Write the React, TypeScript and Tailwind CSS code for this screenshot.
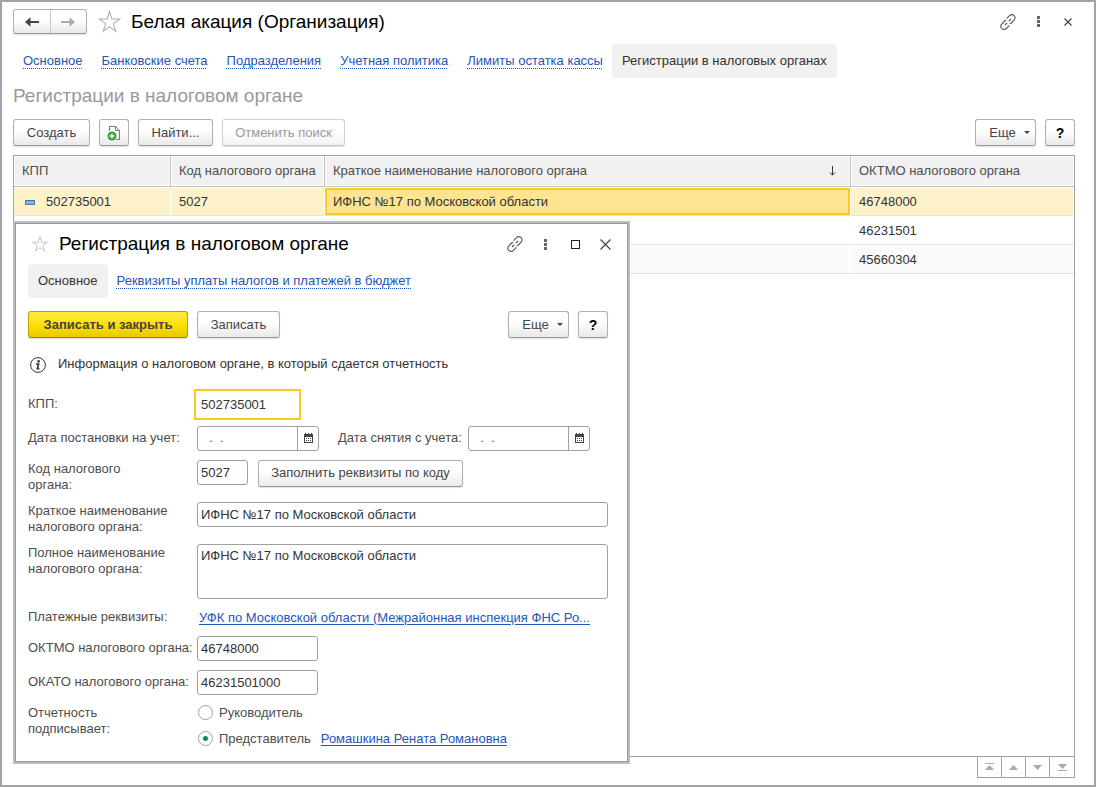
import { useState } from 'react';
import type { ReactNode } from 'react';

const registrations = [
    { kpp: '502735001', code: '5027', name: 'ИФНС №17 по Московской области', oktmo: '46748000' },
    { kpp: '', code: '', name: '', oktmo: '46231501' },
    { kpp: '', code: '', name: '', oktmo: '45660304' },
];

const tabs = ['Основное', 'Банковские счета', 'Подразделения', 'Учетная политика', 'Лимиты остатка кассы'];

const Button = ({ children, variant = 'default', className = '', ...props }: any) => {
    const variants = {
        default: 'border-[#b0b0b0] border-b-[#989898] bg-linear-to-b from-white from-40% to-[#e9e9e9] text-[#444]',
        primary: 'border-[#b8a000] border-b-[#948000] bg-linear-to-b from-[#ffec3d] via-[#ffe000] to-[#e8c900] font-bold text-[#444]',
        disabled: 'border-[#d0d0d0] border-b-[#c4c4c4] bg-linear-to-b from-white from-40% to-[#f3f3f3] text-[#999]',
    };
    return (
        <button
            type="button"
            disabled={variant === 'disabled'}
            className={`flex h-[27px] shrink-0 items-center justify-center rounded-[3px] border whitespace-nowrap shadow-[0_1px_1px_#0000001f] ${variants[variant as keyof typeof variants]} ${className}`}
            {...props}
        >
            {children}
        </button>
    );
};

const MoreButton = () => (
    <Button className="w-[61px] gap-2 pl-2">
        Еще
        <svg width="6" height="3" viewBox="0 0 6 3" fill="#444" aria-hidden="true">
            <path d="M0 0h6L3 3z" />
        </svg>
    </Button>
);

const HelpButton = () => (
    <Button className="w-[30px]" aria-label="Справка">
        <span className="text-sm font-bold text-black">?</span>
    </Button>
);

const StarIcon = ({ size }: { size: number }) => (
    <svg width={size} height={size} viewBox="0 0 24 24" fill="none" stroke="#a9b0b6" aria-hidden="true">
        <path d="M12 2.4l2.3 7.2h7.6l-6.2 4.5 2.4 7.3-6.1-4.5-6.1 4.5 2.4-7.3-6.2-4.5h7.6z" />
    </svg>
);

const LinkIcon = () => (
    <svg width="16" height="16" viewBox="0 0 16 16" fill="none" stroke="#555" strokeWidth="1.1" aria-hidden="true">
        <path d="M6.6 4.6l2.9-2.9a3 3 0 0 1 4.8 4.2l-3 3.1a3 3 0 0 1-1.6.8" />
        <path d="M9.4 11.4l-2.9 2.9a3 3 0 0 1-4.8-4.2l3-3.1a3 3 0 0 1 1.6-.8" />
        <path d="M5 11l2.2-2.2M8.8 7.2L11 5" />
    </svg>
);

const DotsIcon = () => (
    <svg width="3" height="11" viewBox="0 0 3 11" fill="#666" aria-hidden="true">
        <path d="M0 0h3v3H0zM0 4h3v3H0zM0 8h3v3H0z" />
    </svg>
);

const CloseIcon = ({ size }: { size: number }) => (
    <svg width={size} height={size} viewBox={`0 0 ${size} ${size}`} stroke="#444" strokeWidth="1.2" aria-hidden="true">
        <path d={`M.5.5L${size - 0.5} ${size - 0.5}M${size - 0.5}.5L.5 ${size - 0.5}`} />
    </svg>
);

const CalendarIcon = () => (
    <svg width="9" height="10" viewBox="0 0 9 10" fill="#444" aria-hidden="true">
        <path fillRule="evenodd" d="M1 0h1v1h2V0h1v1h2V0h1v1h1v9H0V1h1zM1 4v5h7V4z" />
        <path d="M2 5h1v1H2zM4 5h1v1H4zM6 5h1v1H6zM2 7h1v1H2zM4 7h1v1H4zM6 7h1v1H6z" />
    </svg>
);

const IconButton = ({ label, children }: { label: string; children: ReactNode }) => (
    <button type="button" aria-label={label} className="flex h-5 w-[30px] items-center justify-center">
        {children}
    </button>
);

const TabLink = ({ children }: { children: ReactNode }) => (
    <a href="#" className="text-[#1f55b8] underline decoration-dotted decoration-1 underline-offset-3">
        {children}
    </a>
);

const inputClass = 'h-[25px] rounded-[3px] border border-[#a0a0a0] bg-white px-[3px] text-[#333] outline-none';

const Row = ({ label, id, tall = false, children }: { label: string; id?: string; tall?: boolean; children: ReactNode }) => (
    <div className={`flex ${tall ? 'items-start' : 'items-center'}`}>
        <label htmlFor={id} className={`w-[169px] shrink-0 leading-4 whitespace-pre-line ${tall ? 'pt-px' : ''}`}>
            {label}
        </label>
        {children}
    </div>
);

const DateField = ({ id }: { id: string }) => (
    <div className="flex h-[25px] w-[122px] rounded-[3px] border border-[#a0a0a0] bg-white">
        <input id={id} type="text" defaultValue="  .  ." className="w-full min-w-0 px-1 text-[#555] outline-none" />
        <button
            type="button"
            aria-label="Выбрать дату"
            className="flex w-[21px] shrink-0 items-center justify-center border-l border-[#a0a0a0]"
        >
            <CalendarIcon />
        </button>
    </div>
);

const radioClass =
    'size-[15px] appearance-none rounded-full border border-[#a0a0a0] bg-white checked:bg-[radial-gradient(circle,#009646_2px,transparent_3px)]';

function RegistrationDialog() {
    const [signer, setSigner] = useState('representative');

    return (
        <div
            role="dialog"
            aria-label="Регистрация в налоговом органе"
            className="absolute top-[219px] left-[11px] w-[617px] border-2 border-[#bdbdbd] bg-white"
        >
            <div className="border border-[#999] pr-[19px] pb-[14px] pl-3">
                <div className="flex items-center pt-2">
                    <div className="flex w-[31px] pl-[3px]">
                        <StarIcon size={18} />
                    </div>
                    <h2 className="flex-1 text-[19px] leading-6 text-black">Регистрация в налоговом органе</h2>
                    <div className="-mr-3 flex">
                        <IconButton label="Ссылка"><LinkIcon /></IconButton>
                        <IconButton label="Меню"><DotsIcon /></IconButton>
                        <IconButton label="Развернуть">
                            <span className="size-[9px] border border-[#222]" />
                        </IconButton>
                        <IconButton label="Закрыть"><CloseIcon size={11} /></IconButton>
                    </div>
                </div>

                <nav className="mt-2 flex items-center gap-[9px]">
                    <span className="rounded-[4px] bg-[#f1f1f1] px-[10px] py-[9px] leading-4 text-[#333]">Основное</span>
                    <TabLink>Реквизиты уплаты налогов и платежей в бюджет</TabLink>
                </nav>

                <div className="mt-[13px] flex items-center gap-[9px]">
                    <Button variant="primary" className="w-40">Записать и закрыть</Button>
                    <Button className="w-[83px]">Записать</Button>
                    <div className="flex-1" />
                    <MoreButton />
                    <HelpButton />
                </div>

                <div className="mt-4 flex items-center gap-3 pl-[2px] text-[#333]">
                    <svg width="16" height="18" viewBox="0 0 16 18" fill="none" stroke="#333" aria-hidden="true">
                        <circle cx="8" cy="10" r="7.4" />
                        <circle cx="8.6" cy="6.2" r="1.3" fill="#333" stroke="none" />
                        <path d="M6 9h2.6l-1.2 4.6h2" strokeWidth="1.7" />
                    </svg>
                    Информация о налоговом органе, в который сдается отчетность
                </div>

                <form className="mt-[18px] flex flex-col gap-[9px]">
                    <Row label="КПП:" id="kpp">
                        <input
                            id="kpp"
                            defaultValue="502735001"
                            className="h-[25px] w-[101px] bg-white px-1 text-[#333] outline-2 outline-offset-1 outline-[#f8ca24]"
                        />
                    </Row>
                    <Row label="Дата постановки на учет:" id="start">
                        <DateField id="start" />
                        <label htmlFor="end" className="ml-[19px] w-[130px]">Дата снятия с учета:</label>
                        <DateField id="end" />
                    </Row>
                    <Row label={'Код налогового\nоргана:'} id="code" tall>
                        <input id="code" defaultValue="5027" className={`${inputClass} w-[51px]`} />
                        <Button className="ml-[10px] w-[205px]">Заполнить реквизиты по коду</Button>
                    </Row>
                    <Row label={'Краткое наименование\nналогового органа:'} id="short" tall>
                        <input id="short" defaultValue="ИФНС №17 по Московской области" className={`${inputClass} flex-1`} />
                    </Row>
                    <Row label={'Полное наименование\nналогового органа:'} id="full" tall>
                        <textarea
                            id="full"
                            defaultValue="ИФНС №17 по Московской области"
                            className="h-[55px] flex-1 resize-none rounded-[3px] border border-[#a0a0a0] bg-white px-[3px] py-[3px] leading-4 text-[#333] outline-none"
                        />
                    </Row>
                    <Row label="Платежные реквизиты:">
                        <a href="#" className="pl-[2px] leading-[19px] text-[#1f55b8] underline underline-offset-2">
                            УФК по Московской области (Межрайонная инспекция ФНС Ро...
                        </a>
                    </Row>
                    <Row label="ОКТМО налогового органа:" id="oktmo">
                        <input id="oktmo" defaultValue="46748000" className={`${inputClass} w-[121px]`} />
                    </Row>
                    <Row label="ОКАТО налогового органа:" id="okato">
                        <input id="okato" defaultValue="46231501000" className={`${inputClass} w-[121px]`} />
                    </Row>
                    <Row label={'Отчетность\nподписывает:'} tall>
                        <div className="flex flex-col gap-[10px] pt-px pl-px leading-4">
                            <label className="flex items-center gap-[6px]">
                                <input
                                    type="radio"
                                    name="signer"
                                    className={radioClass}
                                    checked={signer === 'head'}
                                    onChange={() => setSigner('head')}
                                />
                                Руководитель
                            </label>
                            <div className="flex items-center gap-[10px]">
                                <label className="flex items-center gap-[6px]">
                                    <input
                                        type="radio"
                                        name="signer"
                                        className={radioClass}
                                        checked={signer === 'representative'}
                                        onChange={() => setSigner('representative')}
                                    />
                                    Представитель
                                </label>
                                <a href="#" className="text-[#1f55b8] underline underline-offset-2">Ромашкина Рената Романовна</a>
                            </div>
                        </div>
                    </Row>
                </form>
            </div>
        </div>
    );
}

const thClass = 'h-[31px] border-b border-[#c0c0c0] bg-[#f1f1f1] px-2 text-left font-normal shadow-[inset_0_0_0_1px_#fff]';
const tdClass = 'h-[29px] border-y border-r border-t-white border-r-white border-b-[#e2e2e2] px-2 pt-px';

export default function App() {
    return (
        <div className="relative flex min-h-screen flex-col border-2 border-[#a3a3a3] bg-white pr-[19px] pb-[7px] pl-[11px] font-['Liberation_Sans',Arial,sans-serif] text-[13px] text-[#4d4d4d]">
            <header className="flex items-center pt-[7px]">
                <div className="flex h-[25px] w-[74px] rounded-[3px] border border-[#b0b0b0] border-b-[#989898] bg-linear-to-b from-white from-40% to-[#e9e9e9] shadow-[0_1px_1px_#0000001f]">
                    <button type="button" aria-label="Назад" className="flex flex-1 items-center justify-center border-r border-[#c8c8c8]">
                        <svg width="14" height="10" viewBox="0 0 14 10" fill="#444" aria-hidden="true">
                            <path d="M0 5L5.5.2v3.8H14v2H5.5v3.8z" />
                        </svg>
                    </button>
                    <button type="button" aria-label="Вперед" className="flex flex-1 items-center justify-center">
                        <svg width="14" height="10" viewBox="0 0 14 10" fill="#aaa" aria-hidden="true">
                            <path d="M14 5L8.5.2v3.8H0v2h8.5v3.8z" />
                        </svg>
                    </button>
                </div>
                <div className="ml-[10px] flex">
                    <StarIcon size={25} />
                </div>
                <h1 className="ml-[9px] flex-1 text-[19px] leading-6 text-black">Белая акация (Организация)</h1>
                <div className="-mr-2 flex">
                    <IconButton label="Ссылка"><LinkIcon /></IconButton>
                    <IconButton label="Меню"><DotsIcon /></IconButton>
                    <IconButton label="Закрыть"><CloseIcon size={8} /></IconButton>
                </div>
            </header>

            <nav className="mt-[10px] flex items-center gap-[19px] pl-[10px]">
                {tabs.map((tab) => (
                    <TabLink key={tab}>{tab}</TabLink>
                ))}
                <span className="-ml-[10px] rounded-[4px] bg-[#f1f1f1] px-[10px] py-[9px] leading-4 text-[#333]">
                    Регистрации в налоговых органах
                </span>
            </nav>

            <h2 className="mt-[6px] text-[19px] leading-6 text-[#999]">Регистрации в налоговом органе</h2>

            <div className="mt-[11px] flex items-center gap-[9px]">
                <Button className="w-[77px]">Создать</Button>
                <Button className="w-[30px]" aria-label="Создать копированием">
                    <svg width="14" height="16" viewBox="0 0 14 16" fill="none" aria-hidden="true">
                        <path d="M2.5 6V1.500h6l4 4v9H9" stroke="#6d7b8a" />
                        <path d="M8.500 1.500v4h4" stroke="#6d7b8a" />
                        <circle cx="5" cy="11" r="4.500" fill="#2fa336" />
                        <path d="M5 8.500v5M2.500 11h5" stroke="#fff" strokeWidth="1.4" />
                    </svg>
                </Button>
                <Button className="w-[75px]">Найти...</Button>
                <Button variant="disabled" className="w-[123px]">Отменить поиск</Button>
                <div className="flex-1" />
                <MoreButton />
                <HelpButton />
            </div>

            <div className="mt-[9px] flex-1 border border-[#a0a0a0]">
                <table className="w-full table-fixed border-separate border-spacing-0">
                    <thead>
                        <tr>
                            <th className={`${thClass} w-[157px] border-r`}>КПП</th>
                            <th className={`${thClass} w-[154px] border-r whitespace-nowrap`}>Код налогового органа</th>
                            <th className={`${thClass} border-r`}>
                                <div className="flex items-center justify-between pr-[6px]">
                                    Краткое наименование налогового органа
                                    <svg width="7" height="10" viewBox="0 0 7 10" fill="none" stroke="#333" aria-hidden="true">
                                        <path d="M3.5 0v9M1 6.5l2.5 2.7L6 6.5" />
                                    </svg>
                                </div>
                            </th>
                            <th className={`${thClass} w-[223px]`}>ОКТМО налогового органа</th>
                        </tr>
                    </thead>
                    <tbody className="text-[#333]">
                        {registrations.map((row, i) => (
                            <tr key={row.oktmo} className={i === 0 ? 'bg-[#fdf2c8]' : i === 2 ? 'bg-[#fafafa]' : ''}>
                                <td className={tdClass}>
                                    {row.kpp && (
                                        <div className="flex items-center gap-[11px] pl-[3px]">
                                            <span className="h-[5px] w-[10px] border border-[#4f7896] bg-[#7fb2d6]" />
                                            {row.kpp}
                                        </div>
                                    )}
                                </td>
                                <td className={tdClass}>{row.code}</td>
                                <td className={`${tdClass} ${i === 0 ? 'bg-[#fee491] shadow-[inset_0_0_0_2px_#fccb1d]' : ''}`}>
                                    {row.name}
                                </td>
                                <td className={tdClass}>{row.oktmo}</td>
                            </tr>
                        ))}
                    </tbody>
                </table>
            </div>

            {/* list scrolling buttons */}
            <div className="flex justify-end">
                <div className="flex divide-x divide-[#a0a0a0] border border-t-0 border-[#a0a0a0]">
                    {[
                        ['В начало', 'M0 0h9v1H0zM4.5 2L9 7H0z'],
                        ['Вверх', 'M4.5 2L9 7H0z'],
                        ['Вниз', 'M4.5 7L9 2H0z'],
                        ['В конец', 'M0 7h9v1H0zM4.5 6L9 1H0z'],
                    ].map(([label, d]) => (
                        <button key={label} type="button" aria-label={label} className="flex h-5 w-6 items-center justify-center">
                            <svg width="9" height="8" viewBox="0 0 9 8" fill="#aaa" aria-hidden="true">
                                <path d={d} />
                            </svg>
                        </button>
                    ))}
                </div>
            </div>

            <RegistrationDialog />
        </div>
    );
}
